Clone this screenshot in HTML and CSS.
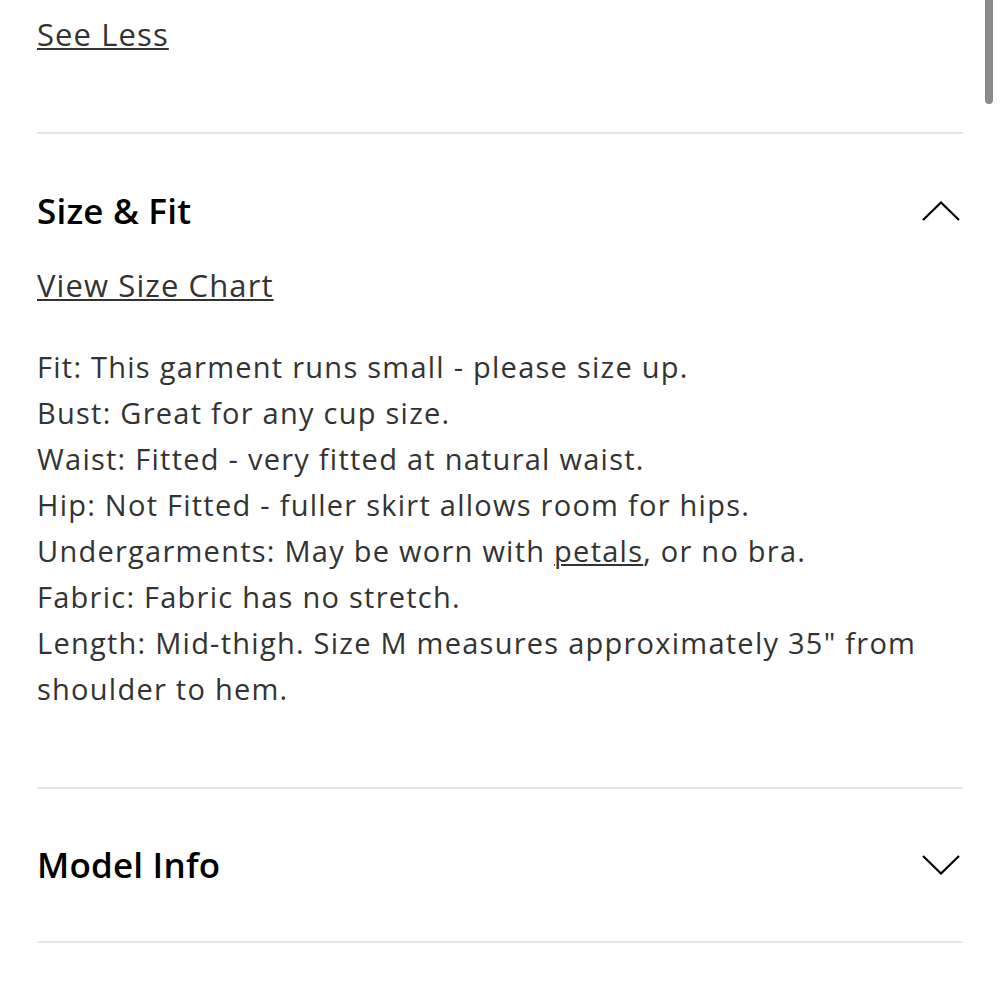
FILE: index.html
```html
<!DOCTYPE html>
<html>
<head>
<meta charset="utf-8">
<link rel="stylesheet" href="styles.css">
</head>
<body>
<main class="page">
  <section class="block top">
    <a class="link" href="#">See Less</a>
  </section>
  <section class="block open">
    <div class="acc-head">
      <h2 class="acc-title">Size &amp; Fit</h2>
      <svg class="chev" width="38" height="20" viewBox="0 0 38 20"><path d="M1 19 L19 1.5 L37 19" fill="none" stroke="#000" stroke-width="2.2"/></svg>
    </div>
    <a class="link chart" href="#">View Size Chart</a>
    <p class="details">Fit: This garment runs small - please size up.<br>Bust: Great for any cup size.<br>Waist: Fitted - very fitted at natural waist.<br>Hip: Not Fitted - fuller skirt allows room for hips.<br>Undergarments: May be worn with <a class="inline" href="#">petals</a>, or no bra.<br>Fabric: Fabric has no stretch.<br>Length: Mid-thigh. Size M measures approximately 35" from shoulder to hem.</p>
  </section>
  <section class="block closed">
    <div class="acc-head">
      <h2 class="acc-title">Model Info</h2>
      <svg class="chev" width="38" height="20" viewBox="0 0 38 20"><path d="M1 1 L19 18.5 L37 1" fill="none" stroke="#000" stroke-width="2.2"/></svg>
    </div>
  </section>
</main>
<div class="scrollbar"></div>
</body>
</html>
```
FILE: styles.css
```css
html, body {
  margin: 0;
  padding: 0;
  background: #fff;
}
body {
  font-family: "Open Sans", "Noto Sans", sans-serif;
  color: #333;
  overflow: hidden;
}
.page {
  padding: 11px 37px 0 37px;
}
.block {
  border-bottom: 2px solid #e6e6e6;
}
.top {
  padding-bottom: 75px;
}
.link {
  display: inline-block;
  font-size: 31px;
  line-height: 46px;
  letter-spacing: 1.1px;
  color: #333;
  text-decoration: underline;
  text-decoration-thickness: 2px;
  text-underline-offset: 2px;
}
.open {
  padding-top: 54px;
  padding-bottom: 75px;
}
.acc-head {
  display: flex;
  justify-content: space-between;
  align-items: center;
  height: 46px;
}
.acc-title {
  margin: 0;
  font-size: 35px;
  line-height: 46px;
  font-weight: 600;
  letter-spacing: 0.2px;
  color: #000;
}
.chev {
  margin-right: 3px;
}
.chart {
  margin-top: 28px;
  display: block;
  width: max-content;
}
.details {
  margin: 36px 0 0 0;
  font-size: 29px;
  line-height: 46px;
  letter-spacing: 1.25px;
  color: #333;
}
.inline {
  color: #333;
  text-decoration: underline;
  text-decoration-thickness: 2px;
  text-underline-offset: 2px;
}
.closed {
  padding-top: 53px;
  padding-bottom: 53px;
}
.scrollbar {
  position: fixed;
  top: 0;
  right: 7px;
  width: 8px;
  height: 104px;
  background: #8a8a8a;
  border-radius: 0 0 4px 4px;
}
```
